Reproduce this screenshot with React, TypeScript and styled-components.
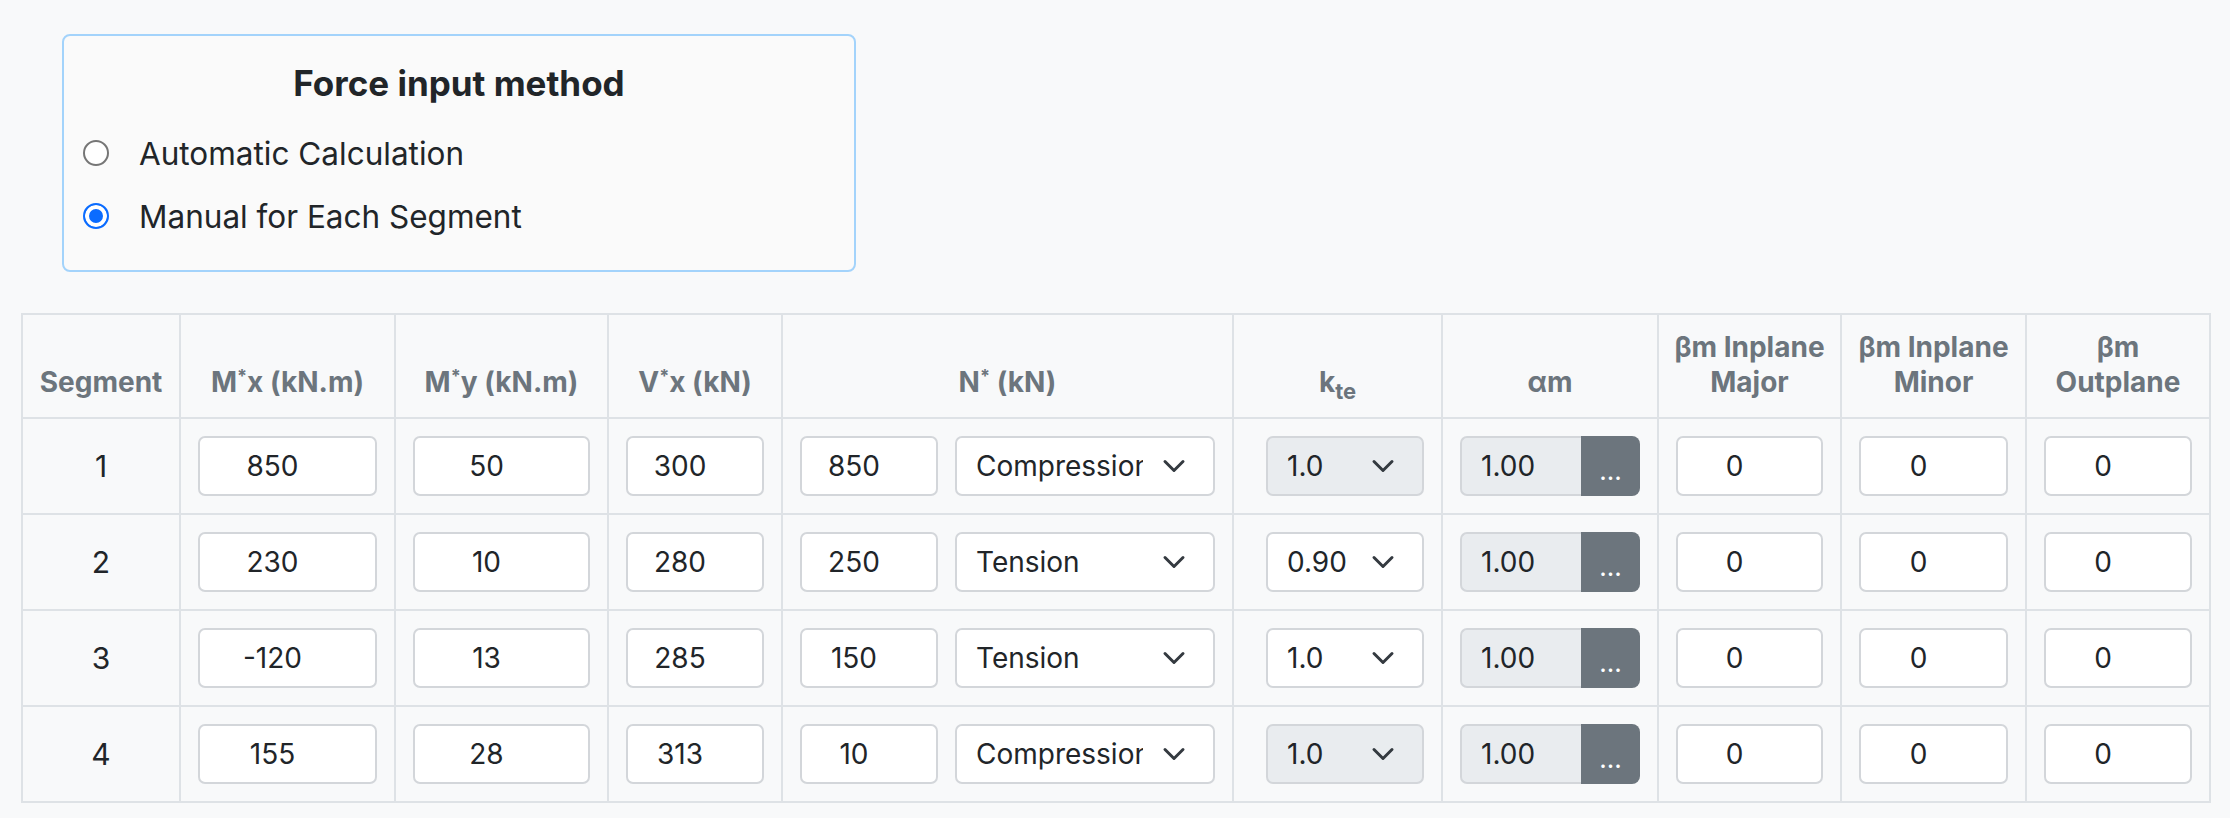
import styled, { createGlobalStyle } from 'styled-components';

const GlobalStyle = createGlobalStyle`
  body {
    margin: 0;
    background: #f8f9fa;
    font-family: Inter, "Noto Sans", sans-serif;
    color: #212529;
  }
`;

const Page = styled.div`
  padding: 34px 21px 19px 21px;
`;

const MethodBox = styled.fieldset`
  box-sizing: border-box;
  width: 794px;
  height: 238px;
  margin: 0 0 41px 41px;
  padding: 0;
  border: 2px solid #a3d3fb;
  border-radius: 8px;
  background: #fafafa;
`;

const Title = styled.h5`
  margin: 0;
  padding-top: 25px;
  height: 45px;
  text-align: center;
  font-size: 35px;
  line-height: 45px;
  font-weight: 700;
  color: #212529;
`;

const RadioList = styled.div`
  display: flex;
  flex-direction: column;
  gap: 19px;
  margin-top: 25px;
  padding-left: 19px;
`;

const RadioRow = styled.label`
  display: flex;
  align-items: center;
  gap: 30px;
  height: 44px;
  font-size: 31.5px;
  cursor: pointer;
`;

const Radio = styled.input`
  appearance: none;
  box-sizing: border-box;
  width: 26px;
  height: 26px;
  margin: 0;
  border: 2px solid #767676;
  border-radius: 50%;
  background: #fff;

  &:checked {
    border-color: #0b6cff;
    background: #0b6cff;
    box-shadow: inset 0 0 0 4px #fff;
  }
`;

const Table = styled.table`
  width: 2188px;
  table-layout: fixed;
  border-collapse: collapse;
  border: 2px solid #dee2e6;
`;

const Th = styled.th`
  height: 104px;
  box-sizing: border-box;
  padding: 0 4px 17px;
  vertical-align: bottom;
  text-align: center;
  white-space: nowrap;
  border: 2px solid #dee2e6;
  color: #6c757d;
  font-size: 28px;
  line-height: 35px;
  font-weight: 700;

  sup {
    font-size: 18px;
    vertical-align: 10px;
    line-height: 0;
  }
  sub {
    font-size: 22px;
    vertical-align: -7px;
    line-height: 0;
  }
`;

const Td = styled.td<{ $padLeft?: number }>`
  padding: 17px 17px 17px ${(p) => p.$padLeft ?? 17}px;
  vertical-align: middle;
  text-align: center;
  border: 2px solid #dee2e6;
  font-size: 30px;
`;

const NumInput = styled.input`
  box-sizing: border-box;
  width: 100%;
  height: 60px;
  padding: 0 51px 0 21px;
  border: 2px solid #d3d6da;
  border-radius: 7px;
  background: #fff;
  font-family: inherit;
  font-size: 28px;
  color: #212529;
  text-align: center;
  outline: none;
`;

const ForceGroup = styled.div`
  display: flex;
  gap: 17px;

  & > input {
    width: 138px;
    flex: none;
  }
`;

const SelectWrap = styled.div`
  position: relative;
  flex: 1;
`;

const Select = styled.select`
  appearance: none;
  box-sizing: border-box;
  width: 100%;
  height: 60px;
  padding: 0 70px 0 19px;
  border: 2px solid #d3d6da;
  border-radius: 7px;
  background: #fff;
  font-family: inherit;
  font-size: 28px;
  color: #212529;
  outline: none;

  &:disabled {
    background: #e9ecef;
    opacity: 1;
    color: #212529;
  }
`;

const Chevron = styled.svg`
  position: absolute;
  right: 29px;
  top: 50%;
  margin-top: -12px;
  width: 24px;
  height: 24px;
  pointer-events: none;
`;

const InputGroup = styled.div`
  display: flex;
  height: 60px;
`;

const ReadonlyInput = styled.input`
  box-sizing: border-box;
  flex: 1;
  min-width: 0;
  height: 60px;
  padding: 0 10px 0 19px;
  border: 2px solid #d3d6da;
  border-right: none;
  border-radius: 7px 0 0 7px;
  background: #e9ecef;
  font-family: inherit;
  font-size: 28px;
  color: #212529;
  outline: none;
`;

const DotsButton = styled.button`
  width: 59px;
  flex: none;
  border: none;
  border-radius: 0 8px 8px 0;
  background: #6c757d;
  color: #fff;
  font-family: inherit;
  font-size: 26px;
  line-height: 1;
  padding: 10px 0 0;
  cursor: pointer;
`;

type Segment = {
  mx: string;
  my: string;
  vx: string;
  n: string;
  type: 'Compression' | 'Tension';
  kte: string;
};

const segments: Segment[] = [
  { mx: '850', my: '50', vx: '300', n: '850', type: 'Compression', kte: '1.0' },
  { mx: '230', my: '10', vx: '280', n: '250', type: 'Tension', kte: '0.90' },
  { mx: '-120', my: '13', vx: '285', n: '150', type: 'Tension', kte: '1.0' },
  { mx: '155', my: '28', vx: '313', n: '10', type: 'Compression', kte: '1.0' },
];

const widths = [158, 215, 213, 174, 451, 209, 216, 183, 185, 184];

const ChevronIcon = () => (
  <Chevron viewBox="0 0 16 16">
    <path
      d="m2 5 6 6 6-6"
      fill="none"
      stroke="#343a40"
      strokeWidth="2"
      strokeLinecap="round"
      strokeLinejoin="round"
    />
  </Chevron>
);

const App = () => {
  return (
    <Page>
      <GlobalStyle />
      <MethodBox>
        <Title>Force input method</Title>
        <RadioList>
          <RadioRow>
            <Radio type="radio" name="method" value="auto" />
            Automatic Calculation
          </RadioRow>
          <RadioRow>
            <Radio type="radio" name="method" value="manual" defaultChecked />
            Manual for Each Segment
          </RadioRow>
        </RadioList>
      </MethodBox>

      <Table>
        <colgroup>
          {widths.map((w, i) => (
            <col key={i} style={{ width: w }} />
          ))}
        </colgroup>
        <thead>
          <tr>
            <Th>Segment</Th>
            <Th>
              M<sup>*</sup>x (kN.m)
            </Th>
            <Th>
              M<sup>*</sup>y (kN.m)
            </Th>
            <Th>
              V<sup>*</sup>x (kN)
            </Th>
            <Th>
              N<sup>*</sup> (kN)
            </Th>
            <Th>
              k<sub>te</sub>
            </Th>
            <Th>αm</Th>
            <Th>
              βm Inplane
              <br />
              Major
            </Th>
            <Th>
              βm Inplane
              <br />
              Minor
            </Th>
            <Th>
              βm
              <br />
              Outplane
            </Th>
          </tr>
        </thead>
        <tbody>
          {segments.map((s, i) => (
            <tr key={i}>
              <Td>{i + 1}</Td>
              <Td>
                <NumInput type="text" defaultValue={s.mx} />
              </Td>
              <Td>
                <NumInput type="text" defaultValue={s.my} />
              </Td>
              <Td>
                <NumInput type="text" defaultValue={s.vx} />
              </Td>
              <Td>
                <ForceGroup>
                  <NumInput type="text" defaultValue={s.n} />
                  <SelectWrap>
                    <Select defaultValue={s.type}>
                      <option value="Compression">Compression</option>
                      <option value="Tension">Tension</option>
                    </Select>
                    <ChevronIcon />
                  </SelectWrap>
                </ForceGroup>
              </Td>
              <Td $padLeft={32}>
                <SelectWrap>
                  <Select
                    defaultValue={s.kte}
                    disabled={s.type === 'Compression'}
                  >
                    <option value="1.0">1.0</option>
                    <option value="0.90">0.90</option>
                    <option value="0.85">0.85</option>
                  </Select>
                  <ChevronIcon />
                </SelectWrap>
              </Td>
              <Td>
                <InputGroup>
                  <ReadonlyInput type="text" readOnly defaultValue="1.00" />
                  <DotsButton type="button">...</DotsButton>
                </InputGroup>
              </Td>
              <Td>
                <NumInput type="text" defaultValue="0" />
              </Td>
              <Td>
                <NumInput type="text" defaultValue="0" />
              </Td>
              <Td>
                <NumInput type="text" defaultValue="0" />
              </Td>
            </tr>
          ))}
        </tbody>
      </Table>
    </Page>
  );
};

export default App;
